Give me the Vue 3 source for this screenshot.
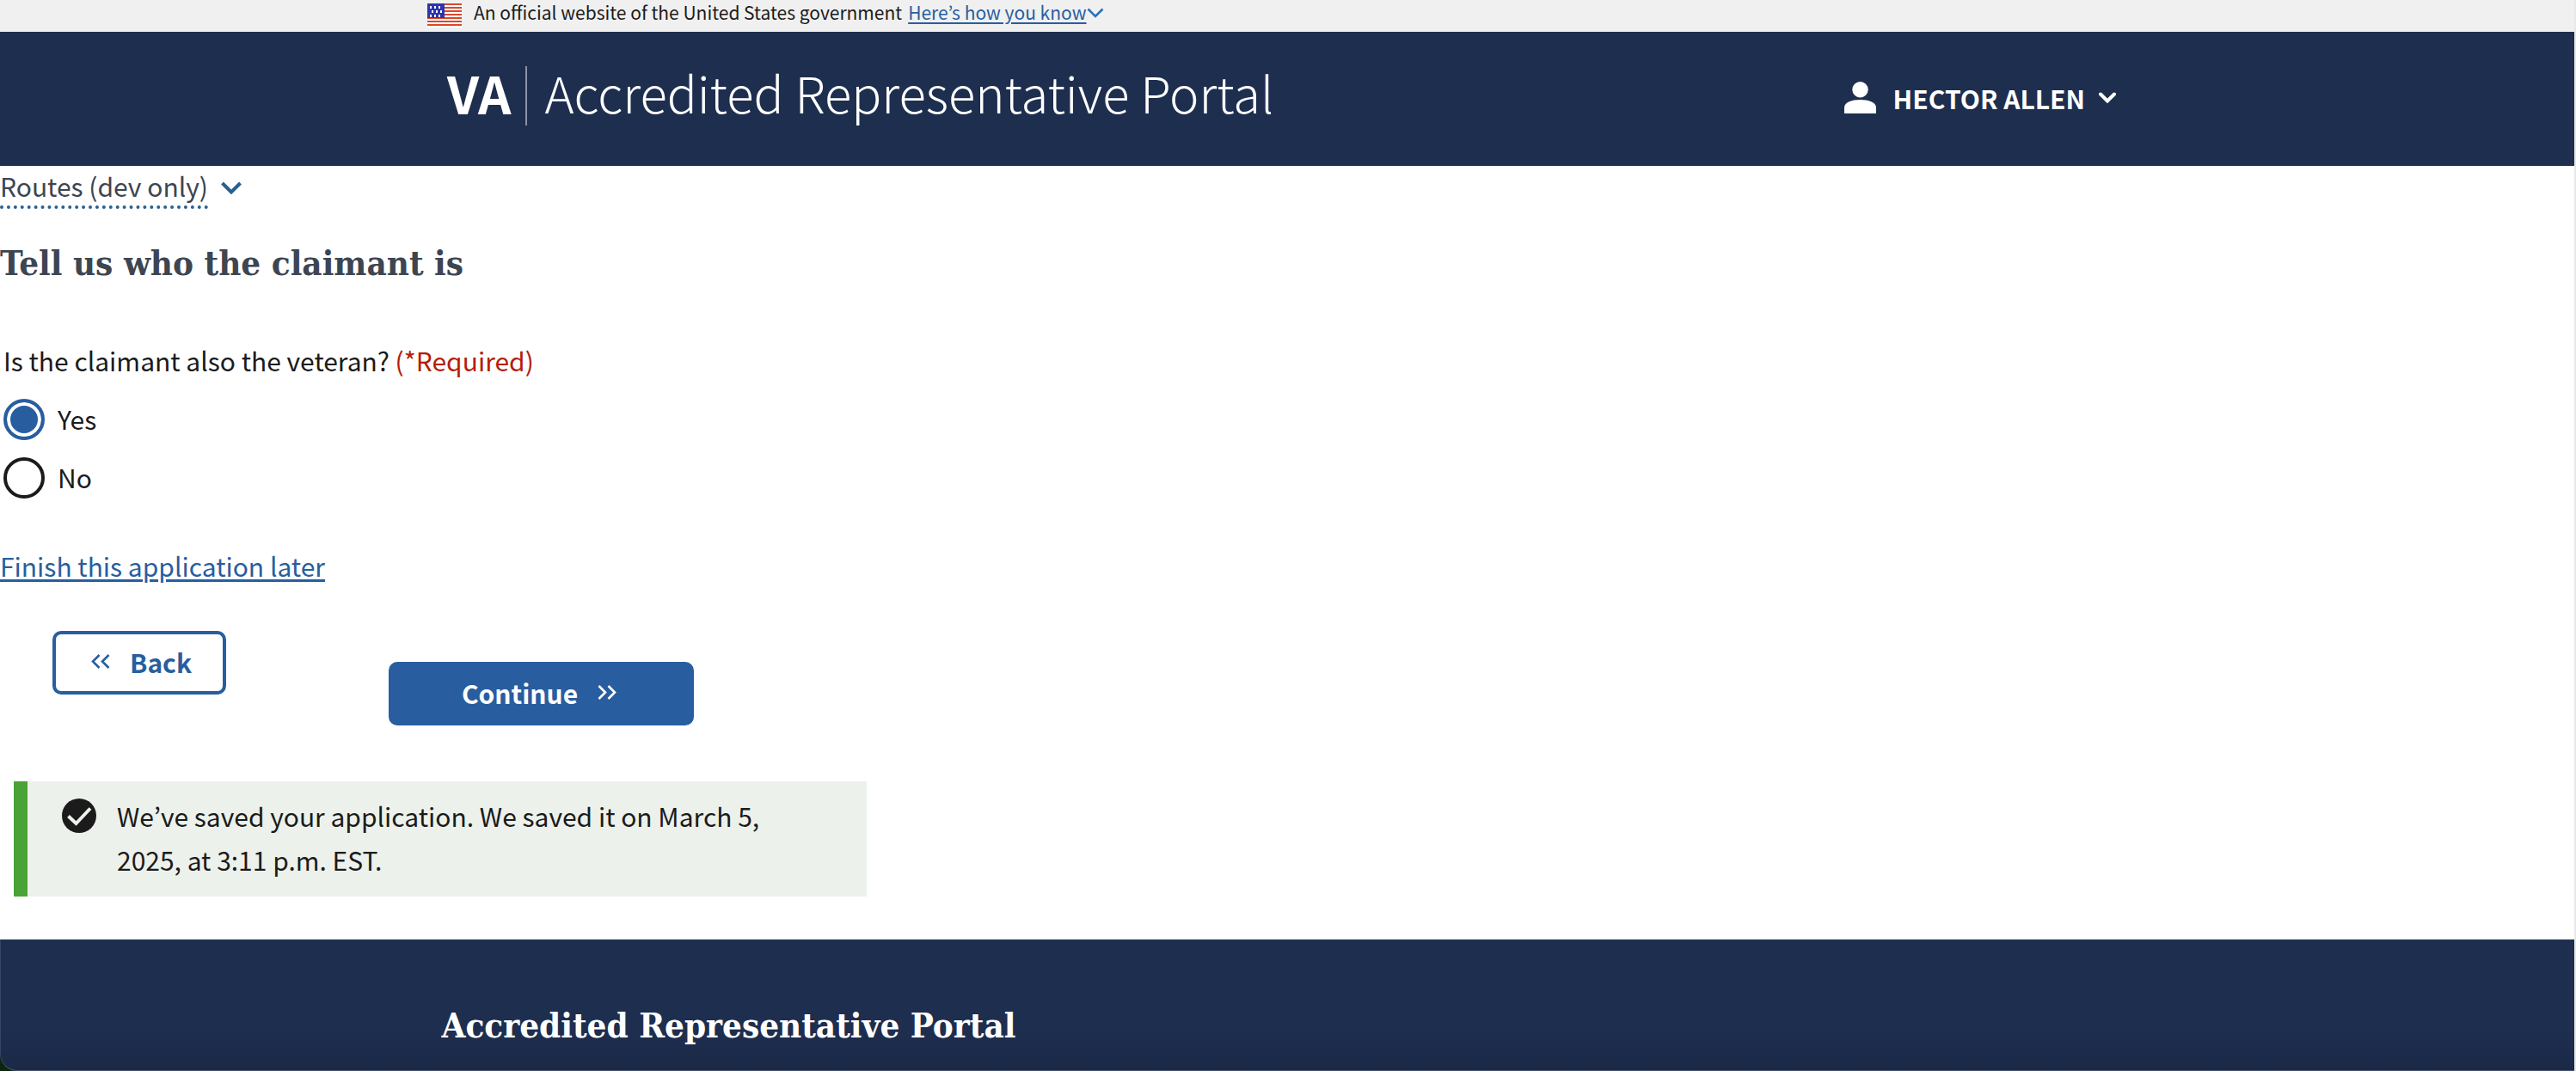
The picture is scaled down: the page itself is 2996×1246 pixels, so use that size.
<script setup>
import { ref } from 'vue'

const isVeteran = ref('yes')
const options = [
  { value: 'yes', label: 'Yes' },
  { value: 'no', label: 'No' },
]
const stripes = [0, 4, 8, 12, 16, 20, 24]
const stars = [
  [3, 3], [8, 3], [13, 3],
  [5, 8], [10, 8], [15, 8],
  [3, 13], [8, 13], [13, 13],
]
</script>

<template>
  <div class="page">
    <div class="banner">
      <div class="container banner-inner">
        <svg class="flag" viewBox="0 0 40 28" aria-hidden="true">
          <rect width="40" height="28" fill="#fff" />
          <rect v-for="y in stripes" :key="y" :y="y" width="40" height="2" fill="#d9482b" />
          <rect width="20" height="17" fill="#2b35af" />
          <rect v-for="([x, y], i) in stars" :key="i" :x="x" :y="y" width="2" height="3" fill="#fff" />
        </svg>
        <span class="banner-text">An official website of the United States government</span>
        <a href="#" class="banner-link">Here’s how you know</a>
        <svg class="banner-chevron" viewBox="0 0 20 12" aria-hidden="true">
          <path d="M1.5 1.5 10 10 18.500 1.500" fill="none" stroke="#2672b8" stroke-width="2.600" />
        </svg>
      </div>
    </div>

    <header class="header">
      <div class="container header-inner">
        <a href="#" class="brand">
          <span class="va">VA</span>
          <span class="brand-name">Accredited Representative Portal</span>
        </a>
        <button type="button" class="user">
          <svg class="user-icon" viewBox="0 0 37 37" aria-hidden="true">
            <circle cx="18.500" cy="9.300" r="9.200" fill="#fff" />
            <path d="M0 37V30C0 24 9 21 18.500 21S37 24 37 30V37Z" fill="#fff" />
          </svg>
          <span>HECTOR ALLEN</span>
          <svg class="user-chevron" viewBox="0 0 20 13" aria-hidden="true">
            <path d="M2 2.500 10 10.500 18 2.500" fill="none" stroke="#fff" stroke-width="4" stroke-linecap="round" />
          </svg>
        </button>
      </div>
    </header>

    <main class="main">
      <button type="button" class="routes">
        <span class="routes-label">Routes (dev only)</span>
        <svg class="routes-chevron" viewBox="0 0 24 15" aria-hidden="true">
          <path d="M1.500 2 12 12.500 22.500 2" fill="none" stroke="#28618f" stroke-width="4" />
        </svg>
      </button>

      <form @submit.prevent>
        <h1 class="title">Tell us who the claimant is</h1>
        <fieldset class="question">
          <legend>Is the claimant also the veteran? <span class="required">(*Required)</span></legend>
          <label v-for="o in options" :key="o.value" class="option">
            <input v-model="isVeteran" type="radio" name="veteran" :value="o.value" />
            <span class="option-label">{{ o.label }}</span>
          </label>
        </fieldset>

        <a href="#" class="finish">Finish this application later</a>

        <div class="actions">
          <button type="button" class="btn back">
            <svg class="btn-icon" viewBox="0 0 22 17" aria-hidden="true">
              <path d="M9.500 1 2 8.500 9.500 16M20.500 1 13 8.500 20.500 16" fill="none" stroke="currentColor" stroke-width="2.600" />
            </svg>
            <span>Back</span>
          </button>
          <button type="submit" class="btn continue">
            <span>Continue</span>
            <svg class="btn-icon" viewBox="0 0 22 17" aria-hidden="true">
              <path d="M1.500 1 9 8.500 1.500 16M12.500 1 20 8.500 12.500 16" fill="none" stroke="currentColor" stroke-width="2.600" />
            </svg>
          </button>
        </div>
      </form>

      <div class="alert" role="status">
        <svg class="alert-icon" viewBox="0 0 40 40" aria-hidden="true">
          <circle cx="20" cy="20" r="20" fill="#1b1b1b" />
          <path d="M7.500 20.500 16.500 29 33 11.500" fill="none" stroke="#ecf1eb" stroke-width="4" />
        </svg>
        <p>We’ve saved your application. We saved it on March 5, 2025, at 3:11 p.m. EST.</p>
      </div>
    </main>

    <footer class="footer">
      <div class="footer-panel">
        <div class="container">
          <h2>Accredited Representative Portal</h2>
        </div>
      </div>
    </footer>
  </div>
</template>

<style>
body {
  margin: 0;
  background: #fff;
}
</style>

<style scoped>
.page {
  box-sizing: border-box;
  min-height: 100vh;
  display: flex;
  flex-direction: column;
  border-right: 2px solid #e8e8e8;
  font-family: "Noto Sans CJK JP", "Noto Sans", sans-serif;
  font-size: 30px;
  line-height: 50px;
  color: #1b1b1b;
}
button {
  font: inherit;
  margin: 0;
  cursor: pointer;
}
svg {
  display: block;
  flex: none;
}
.container {
  box-sizing: border-box;
  max-width: 2000px;
  margin: 0 auto;
}

.banner {
  background: #f0f0f0;
}
.banner-inner {
  display: flex;
  align-items: flex-start;
  padding-bottom: 9px;
  font-size: 21px;
  line-height: 28px;
}
.flag {
  width: 40px;
  height: 28px;
  margin: 4px 14px -4px 0;
}
.banner-link {
  margin-left: 7px;
  color: #285e9f;
  text-decoration-thickness: 2px;
  text-underline-offset: 3px;
}
.banner-chevron {
  width: 20px;
  height: 12px;
  margin-top: 9px;
}

.header {
  background: #1e2e4f;
  color: #fff;
}
.header-inner {
  display: flex;
  align-items: center;
  justify-content: space-between;
  padding: 40px 36px 47px 23px;
}
.brand {
  display: flex;
  align-items: center;
  height: 69px;
  color: #fff;
  text-decoration: none;
}
.va {
  height: 69px;
  padding-right: 17px;
  border-right: 2px solid #8a93a6;
  font-size: 60px;
  font-weight: 700;
  line-height: 60px;
}
.brand-name {
  padding: 0 0 8px 20px;
  font-size: 58px;
  font-weight: 300;
  line-height: 61px;
}
.user {
  display: flex;
  align-items: center;
  padding: 4px 0 0;
  border: 0;
  background: none;
  color: #fff;
  font-weight: 700;
}
.user-icon {
  width: 37px;
  height: 37px;
  margin-right: 20px;
}
.user-chevron {
  width: 20px;
  height: 13px;
  margin-left: 16px;
}

.main {
  flex: none;
}
.routes {
  display: flex;
  align-items: center;
  padding: 0;
  border: 0;
  background: none;
  color: #3d4551;
  line-height: 46px;
}
.routes-label {
  border-bottom: 4px dotted #28618f;
}
.routes-chevron {
  width: 24px;
  height: 15px;
  margin-left: 15px;
}
.title,
.footer h2 {
  margin: 0;
  font-family: "DejaVu Serif Condensed", "DejaVu Serif", serif;
  font-weight: 700;
  font-size: 40px;
  line-height: 50px;
}
.title {
  margin-top: 38px;
  color: #3d4551;
}
.question {
  display: flex;
  flex-direction: column;
  gap: 20px;
  min-width: 0;
  margin: 63px 0 0;
  padding: 0 4px;
  border: 0;
}
.question legend {
  margin-bottom: 20px;
  padding: 0;
}
.required {
  color: #b51d09;
}
.option {
  display: flex;
  align-items: center;
  gap: 15px;
  height: 48px;
}
.option-label {
  padding-bottom: 3px;
}
.option input {
  appearance: none;
  box-sizing: border-box;
  width: 48px;
  height: 48px;
  margin: 0;
  border: 4px solid #1b1b1b;
  border-radius: 50%;
  background: #fff;
}
.option input:checked {
  border-color: #285e9f;
  background: #285e9f;
  box-shadow: inset 0 0 0 4px #fff;
}
.finish {
  display: inline-block;
  margin-top: 53px;
  color: #285e9f;
  text-decoration-thickness: 3px;
  text-underline-offset: 3px;
}
.actions {
  display: flex;
  align-items: flex-start;
  margin: 51px 0 0 61px;
}
.btn {
  box-sizing: border-box;
  display: flex;
  align-items: center;
  justify-content: center;
  gap: 23px;
  height: 74px;
  padding: 0 0 3px;
  border: 4px solid #285e9f;
  border-radius: 10px;
  font-weight: 700;
}
.back {
  width: 202px;
  padding-left: 5px;
  background: #fff;
  color: #285e9f;
}
.continue {
  width: 355px;
  margin: 36px 0 0 189px;
  padding-right: 5px;
  background: #285e9f;
  color: #fff;
}
.btn-icon {
  width: 22px;
  height: 17px;
}
.alert {
  box-sizing: border-box;
  display: flex;
  align-items: flex-start;
  gap: 24px;
  max-width: 992px;
  margin: 65px 16px 50px;
  padding: 15px 80px 17px 40px;
  border-left: 16px solid #4aa336;
  background: #ecf1eb;
  line-height: 51px;
}
.alert-icon {
  width: 40px;
  height: 40px;
  margin-top: 5px;
}
.alert p {
  margin: 0;
}

.footer {
  flex: 1;
  display: flex;
  background: #0f2410;
}
.footer-panel {
  box-sizing: border-box;
  flex: 1;
  padding: 75px 0 27px;
  border-bottom: 1px solid #46526e;
  border-left: 1px solid #35456a;
  border-bottom-left-radius: 20px;
  background: linear-gradient(#1e2e4f 70%, #1b2947);
  color: #fff;
}
.footer .container {
  padding: 0 16px;
}
</style>
